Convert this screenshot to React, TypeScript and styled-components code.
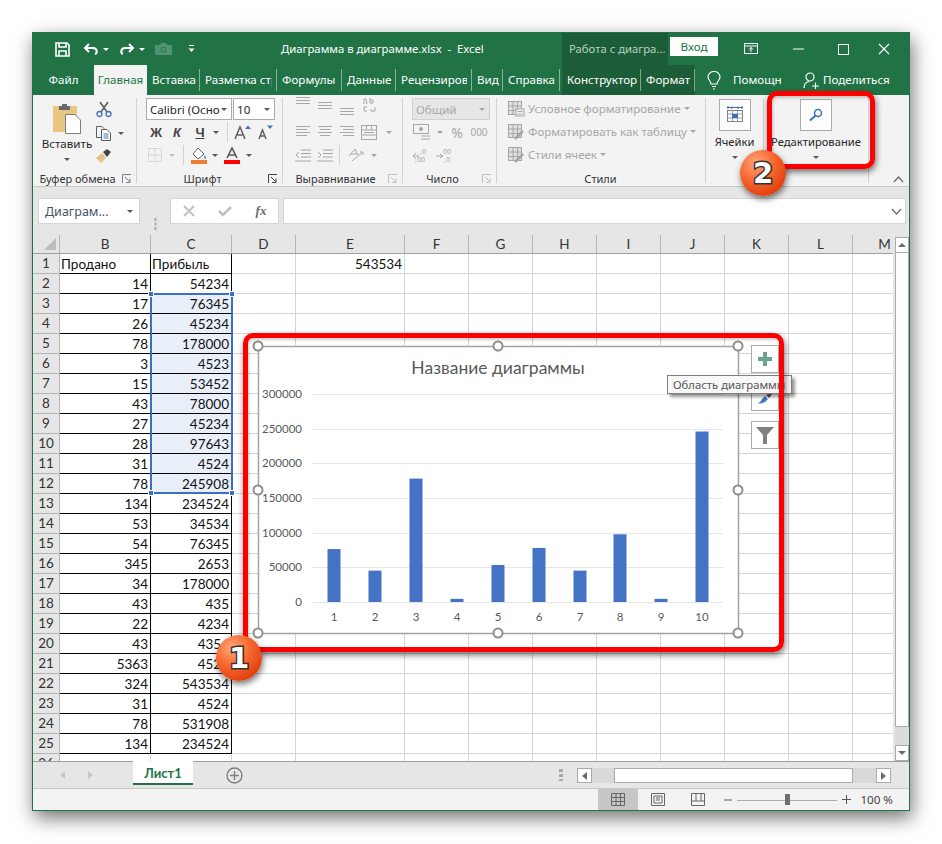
import React from 'react';
import styled, { createGlobalStyle } from 'styled-components';

const Global = createGlobalStyle`
  html, body { margin: 0; padding: 0; background: #fff; }
  body { font-family: "Noto Sans", "Open Sans", sans-serif; font-size: 11.6px; color: #262626; }
  * { box-sizing: border-box; }
  svg { flex: none; display: block; }
`;

const Page = styled.div`position: relative; width: 942px; height: 844px; padding: 32px; overflow: hidden;`;
const Window = styled.div`
  width: 878px; height: 779px; display: flex; flex-direction: column; background: #f3f3f3;
  border: 1px solid #217346; box-shadow: 2px 7px 18px rgba(0,0,0,.55);
`;
const TitleBar = styled.div`height: 32px; background: #217346; display: flex; align-items: stretch; color: #fff; flex: none;`;
const Qat = styled.div`width: 248px; padding-left: 19px; display: flex; align-items: center;`;
const Slot = styled.span<{ $w: number; $ml?: number; $top?: number }>`
  flex: none; width: ${p => p.$w}px; margin-left: ${p => p.$ml ?? 0}px; margin-top: ${p => p.$top ?? 0}px;
  display: flex; align-items: center; justify-content: center; height: 100%;
`;
const CaretSlot = styled.span<{ $top: number }>`height: 8px; margin-top: ${p => p.$top}px; display: flex; align-items: center; flex: none;`;
const DocTitle = styled.div`width: 281px; line-height: 31px; font-size: 11.3px; white-space: pre; color: #fff;`;
const ContextTitle = styled.div`width: 106px; background: #1c5c39; color: #b5d3c2; line-height: 31px; padding-left: 7px; font-size: 11.3px; white-space: nowrap;`;
const SignIn = styled.div`width: 48px; height: 19px; margin: 4px 0 0 2px; background: #fff; color: #217346; text-align: center; line-height: 19px; font-size: 11.6px;`;

const TabsRow = styled.div`height: 30px; background: #217346; display: flex; color: #fff; flex: none;`;
const Tab = styled.div<{ $w: number; $active?: boolean; $sep?: boolean; $center?: boolean }>`
  position: relative; flex: none; width: ${p => p.$w}px; overflow: hidden; white-space: nowrap;
  line-height: 29px; font-size: 11.6px; padding-left: ${p => (p.$center ? 0 : 5)}px; padding-right: ${p => (p.$sep ? 5 : 0)}px;
  text-align: ${p => (p.$center ? 'center' : 'left')};
  background: ${p => (p.$active ? '#f3f3f3' : 'transparent')}; color: ${p => (p.$active ? '#217346' : '#fff')};
  ${p => p.$sep ? `&::after { content: ''; position: absolute; right: 0; top: 4px; bottom: 4px; width: 1px; background: rgba(255,255,255,.45); }` : ''}
`;
const TabClip = styled.span`display: block; overflow: hidden;`;
const ContextTabs = styled.div`display: flex; margin-left: 2px; background: #1c5c39; flex: none;`;
const TabText = styled.div<{ $w: number }>`width: ${p => p.$w}px; line-height: 29px; font-size: 11.6px; flex: none; white-space: nowrap;`;

const Ribbon = styled.div`height: 92px; display: flex; flex: none; background: #f3f3f3; border-bottom: 1px solid #c9c9c9; position: relative;`;
const Group = styled.div<{ $w: number }>`
  flex: none; width: ${p => p.$w}px; height: 85px; margin-top: 3px; display: flex; flex-direction: column;
  border-right: 1px solid #d2d2d2;
`;
const GroupBody = styled.div<{ $pl?: number }>`flex: 1; margin-top: -1px; padding-left: ${p => p.$pl ?? 0}px; display: flex; min-height: 0;`;
const Stack = styled.div`display: flex; flex-direction: column; flex: none;`;
const Row = styled.div<{ $h: number }>`height: ${p => p.$h}px; display: flex; align-items: center;`;
const GroupLabel = styled.div`
  height: 17px; margin-bottom: -4px; display: flex; align-items: center; padding: 0 1px 0 0; font-size: 11px; color: #333; flex: none;
`;
const LabelText = styled.span`flex: 1; text-align: center; white-space: nowrap;`;
const Launcher = styled.span`width: 12px; height: 10px; display: flex; flex: none; margin-right: 1px;`;
const PasteCol = styled.div`width: 58px; margin-left: 5px; display: flex; flex-direction: column; align-items: center; padding-top: 6px; flex: none;`;
const PasteLabel = styled.span`font-size: 11.6px; line-height: 16px; margin-top: 2px; color: #262626;`;
const VSep = styled.span<{ $mx: number }>`width: 1px; height: 20px; margin: 0 ${p => p.$mx}px; background: #d2d2d2; flex: none;`;
const Combo = styled.div<{ $w: number; $ml?: number }>`
  width: ${p => p.$w}px; height: 22px; margin-left: ${p => p.$ml ?? 0}px; flex: none; background: #fff; border: 1px solid #ababab;
  display: flex; align-items: center; justify-content: space-between; padding: 0 4px 0 3px; font-size: 11.6px; white-space: nowrap; overflow: hidden; color: #262626;
`;
const ComboDisabled = styled.div`
  width: 78px; height: 22px; flex: none; background: #e6e6e6; border: 1px solid #d0d0d0; color: #a6a6a6;
  display: flex; align-items: center; justify-content: space-between; padding: 0 4px 0 3px; font-size: 11.6px;
`;
const Caret = styled.span<{ $c?: string }>`
  display: inline-block; width: 0; height: 0; flex: none; border-left: 3.5px solid transparent; border-right: 3.5px solid transparent;
  border-top: 3.5px solid ${p => p.$c ?? '#595959'};
`;
const Bold = styled.span<{ $italic?: boolean; $under?: boolean }>`
  font-family: "Liberation Sans", sans-serif; font-weight: 700; font-size: 13px; color: #444;
  font-style: ${p => (p.$italic ? 'italic' : 'normal')}; text-decoration: ${p => (p.$under ? 'underline' : 'none')};
`;
const StyleRow = styled.div`display: flex; align-items: center; height: 23px; gap: 3px; color: #a6a6a6; font-size: 11.5px; white-space: nowrap;`;
const Muted = styled.span<{ $s?: number }>`color: #a6a6a6; font-size: ${p => p.$s ?? 12}px; white-space: nowrap;`;
const BigCol = styled.div`flex: 1; display: flex; flex-direction: column; align-items: center; padding-top: 1px;`;
const BigBox = styled.div`width: 32px; height: 32px; flex: none; background: #fdfdfd; border: 1px solid #ababab; display: flex; align-items: center; justify-content: center;`;
const BigLabel = styled.span`font-size: 11.2px; line-height: 16px; margin-top: 3px; white-space: nowrap; color: #262626; `;
const Collapse = styled.span`position: absolute; right: 5px; bottom: 3px; display: flex;`;

const FormulaBar = styled.div`height: 48px; flex: none; background: #e6e6e6; padding: 11px 3px 0 5px; display: flex; align-items: flex-start;`;
const NameBox = styled.div`
  width: 102px; height: 26px; flex: none; background: #fff; border: 1px solid #d4d4d4; display: flex; align-items: center; justify-content: space-between;
  padding: 0 6px 0 6px; font-size: 12.5px; color: #44546a;
`;
const FxGroup = styled.div`width: 109px; height: 26px; flex: none; background: #fff; border: 1px solid #d4d4d4; display: flex; align-items: center;`;
const FxText = styled.span`font-family: "Liberation Serif", serif; font-style: italic; font-weight: 700; font-size: 13px; color: #6a6a6a;`;
const FormulaInput = styled.div`flex: 1; height: 26px; margin-left: 4px; background: #fff; border: 1px solid #d4d4d4; display: flex; align-items: center; justify-content: flex-end; padding-right: 3px;`;

const SheetArea = styled.div`height: 526px; flex: none; display: flex; background: #e6e6e6;`;
const SheetMain = styled.div`width: 860px; flex: none; display: flex; flex-direction: column; overflow: hidden;`;
const HeaderRow = styled.div`height: 19px; flex: none; display: flex; border-bottom: 1px solid #9f9f9f; background: #e6e6e6;`;
const Corner = styled.div`width: 27px; flex: none; border-right: 1px solid #b5b5b5; display: flex; align-items: flex-end; justify-content: flex-end; padding: 0 3px 3px 0;`;
const ColHead = styled.div<{ $w: number }>`
  width: ${p => p.$w}px; flex: none; border-right: 1px solid #b5b5b5; text-align: center; font-family: Lato, sans-serif; font-size: 13.5px; line-height: 18px; color: #333;
`;
const Rows = styled.div`flex: 1; overflow: hidden; background: #fff;`;
const DataRow = styled.div`height: 20px; display: flex;`;
const RowHead = styled.div`width: 27px; flex: none; background: #e6e6e6; border-right: 1px solid #b5b5b5; border-bottom: 1px solid #b5b5b5; text-align: center; font-family: Lato, sans-serif; font-size: 13.5px; line-height: 19px; color: #333;`;
const Cell = styled.div<{ $w: number; $strong?: boolean; $sel?: boolean; $right?: boolean }>`
  width: ${p => p.$w}px; flex: none; height: 20px; padding: 0 2px 0 1px; font-family: Lato, sans-serif; font-size: 13.5px; line-height: 20px; color: #111; white-space: nowrap;
  text-align: ${p => (p.$right ? 'right' : 'left')}; background: ${p => (p.$sel ? '#e8eff8' : '#fff')};
  border-right: 1px solid ${p => (p.$strong ? '#000' : '#d4d4d4')}; border-bottom: 1px solid ${p => (p.$strong ? '#000' : '#d4d4d4')};
`;
const VScroll = styled.div`width: 16px; flex: none; padding: 2px 0 0 2px; display: flex; flex-direction: column;`;
const ScrollBtn = styled.div`width: 14px; height: 16px; flex: none; background: #fff; border: 1px solid #ababab; display: flex; align-items: center; justify-content: center;`;
const VThumb = styled.div`width: 14px; height: 474px; flex: none; background: #fff; border: 1px solid #ababab; border-top: none;`;
const VTrack = styled.div`flex: 1; background: #dcdcdc; width: 14px;`;
const Up = styled.span`width: 0; height: 0; border-left: 4px solid transparent; border-right: 4px solid transparent; border-bottom: 4px solid #6a6a6a;`;
const Down = styled.span`width: 0; height: 0; border-left: 4px solid transparent; border-right: 4px solid transparent; border-top: 4px solid #6a6a6a;`;
const Lft = styled.span<{ $c?: string }>`width: 0; height: 0; border-top: 4px solid transparent; border-bottom: 4px solid transparent; border-right: 5px solid ${p => p.$c ?? '#6a6a6a'};`;
const Rgt = styled.span<{ $c?: string }>`width: 0; height: 0; border-top: 4px solid transparent; border-bottom: 4px solid transparent; border-left: 5px solid ${p => p.$c ?? '#6a6a6a'};`;

const SheetTabs = styled.div`height: 28px; flex: none; background: #e6e6e6; border-top: 1px solid #9f9f9f; border-bottom: 1px solid #c9c9c9; display: flex;`;
const SheetTab = styled.div`
  width: 60px; height: 24px; margin: -1px 0 0 33px; flex: none; background: #fff; border-bottom: 2px solid #217346; color: #217346;
  text-align: center; font-family: Lato, sans-serif; font-weight: 700; font-size: 13px; line-height: 25px;
`;
const HScrollWrap = styled.div`display: flex; margin-left: auto; margin-right: 18px; align-items: flex-start; padding-top: 6px;`;
const Grip = styled.div`width: 4px; height: 12px; margin-right: 14px; margin-top: 1px; background: repeating-linear-gradient(#ababab 0 3px, transparent 3px 5px); flex: none;`;
const HBtn = styled.div`width: 15px; height: 15px; flex: none; background: #fff; border: 1px solid #ababab; display: flex; align-items: center; justify-content: center;`;
const HTrack = styled.div`width: 284px; height: 15px; flex: none; background: #d9d9d9; padding: 0 23px 0 22px;`;
const HThumb = styled.div`height: 15px; background: #fff; border: 1px solid #ababab;`;

const StatusBar = styled.div`flex: 1; background: #f3f3f3; display: flex; justify-content: flex-end; align-items: stretch;`;
const ViewBtn = styled.div<{ $active?: boolean }>`width: 40px; flex: none; background: ${p => (p.$active ? '#c6c6c6' : 'transparent')}; display: flex; align-items: center; justify-content: center;`;
const Slider = styled.div`width: 100px; flex: none; position: relative; display: flex; align-items: center; justify-content: center;
  &::before { content: ''; position: absolute; left: 0; right: 0; top: 50%; height: 1px; background: #ababab; }`;
const SliderThumb = styled.span`width: 5px; height: 11px; background: #6e6e6e; position: relative;`;
const ZoomText = styled.div`width: 37px; margin-right: 16px; text-align: right; flex: none; line-height: 21px; font-size: 11.6px; color: #444; white-space: nowrap;`;

const Selection = styled.div`position: absolute; left: 150px; top: 293px; width: 83px; height: 201px; border: 2px solid #3a6fc4; pointer-events: none;`;
const SelHandle = styled.span<{ $x: 'l' | 'r'; $y: 't' | 'b' }>`
  position: absolute; width: 6px; height: 6px; background: #3a6fc4; border: 1px solid #fff;
  ${p => (p.$x === 'l' ? 'left: -4px;' : 'right: -4px;')} ${p => (p.$y === 't' ? 'top: -4px;' : 'bottom: -4px;')}
`;
const ChartSvg = styled.svg`position: absolute; left: 258px; top: 346px; overflow: visible;`;
const ChartBtn = styled.div<{ $top: number; $h: number }>`
  position: absolute; left: 751px; top: ${p => p.$top}px; width: 28px; height: ${p => p.$h}px; background: #fff; border: 1px solid #ababab;
  display: flex; align-items: center; justify-content: center;
`;
const Tooltip = styled.div`
  position: absolute; left: 667px; top: 375px; width: 125px; height: 19px; background: #f8f8f8; border: 1px solid #7f7f7f; box-shadow: 3px 3px 3px rgba(0,0,0,.4);
  font-size: 11.3px; line-height: 17px; padding-left: 5px; color: #575757; white-space: nowrap; overflow: hidden;
`;
const Callout = styled.div<{ $x: number; $y: number; $w: number; $h: number }>`
  position: absolute; left: ${p => p.$x}px; top: ${p => p.$y}px; width: ${p => p.$w}px; height: ${p => p.$h}px;
  border: 5px solid #ff0000; border-radius: 10px; box-shadow: 1px 3px 6px rgba(0,0,0,.55), inset 1px 2px 3px rgba(0,0,0,.2); pointer-events: none;
`;
const Badge = styled.div<{ $x: number; $y: number }>`
  position: absolute; left: ${p => p.$x}px; top: ${p => p.$y}px; width: 46px; height: 46px; border-radius: 50%;
  background: radial-gradient(circle at 35% 28%, #ffa67c 0%, #f7682f 40%, #e2420f 75%, #b9300a 100%);
  box-shadow: 1px 3px 6px rgba(0,0,0,.55); text-align: center; font-family: "DejaVu Sans", sans-serif; font-weight: 700; font-size: 29px; line-height: 46px; color: #fff;
  -webkit-text-stroke: 3px #333; paint-order: stroke fill;
`;

const BLUE = '#4472c4';
const DIS = '#a6a6a6';

const Svg: React.FC<{ w: number; h: number; children: React.ReactNode; stroke?: string; sw?: number }> = ({ w, h, children, stroke = 'none', sw = 1 }) => (
  <svg width={w} height={h} viewBox={`0 0 ${w} ${h}`} fill="none" stroke={stroke} strokeWidth={sw}>{children}</svg>
);

const SaveIcon = () => (
  <Svg w={15} h={15} stroke="#fff" sw={1.6}>
    <path d="M1 1H12L14 3V14H1Z" /><path d="M4 1V5H11V1" /><path d="M4 14V9H11V14" />
  </Svg>
);
const UndoIcon = () => (
  <Svg w={16} h={12} stroke="#fff" sw={2}><path d="M6 1L2 5L6 9" /><path d="M2 5H10C14 5 15 10 12 11" /></Svg>
);
const RedoIcon = () => (
  <Svg w={16} h={12} stroke="#fff" sw={2}><path d="M10 1L14 5L10 9" /><path d="M14 5H6C2 5 1 10 4 11" /></Svg>
);
const CameraIcon = () => (
  <Svg w={17} h={12}><path d="M0 2H5L6 0H11L12 2H17V12H0Z" fill="#4f9470" /><circle cx="8.5" cy="6.5" r="2.5" stroke="#217346" /></Svg>
);
const CustomizeIcon = () => (
  <Svg w={7} h={8}><path d="M1 .5H6" stroke="#fff" /><path d="M0.5 3.5H6.5L3.5 7Z" fill="#fff" /></Svg>
);
const DisplayIcon = () => (
  <Svg w={14} h={12} stroke="#fff"><rect x=".5" y=".5" width="13" height="10" /><path d="M.5 3H13.5" /><path d="M7 9V4.5M5 6.5L7 4.5L9 6.5" /></Svg>
);
const BulbIcon = () => (
  <Svg w={14} h={19} stroke="#fff" sw={1.2}><path d="M4 13C4 10 1 9 1 6A6 5.5 0 0 1 13 6C13 9 10 10 10 13Z" /><path d="M5 15.5H9M6 18H8" /></Svg>
);
const PersonIcon = () => (
  <Svg w={16} h={17} stroke="#fff" sw={1.2}><circle cx="7" cy="5" r="4" /><path d="M1 16C1 12 3 10 6 9.500M9 14H16M12.500 10.500V17" /></Svg>
);
const PasteIcon = () => (
  <Svg w={30} h={31}>
    <rect x="1" y="3" width="24" height="26" fill="#eac683" />
    <path d="M10 3V1H15V3H18V7H7V3Z" fill="#6a6a6a" />
    <path d="M13.500 11.500H23L28.500 17V30.500H13.500Z" fill="#fff" stroke="#7f7f7f" />
  </Svg>
);
const ScissorsIcon = () => (
  <Svg w={16} h={17}>
    <path d="M4 1L11 11M12 1L5 11" stroke="#5f5f5f" strokeWidth="1.600" />
    <circle cx="3.500" cy="13" r="2.500" stroke={BLUE} strokeWidth="1.300" /><circle cx="12.500" cy="13" r="2.500" stroke={BLUE} strokeWidth="1.300" />
  </Svg>
);
const CopyIcon = () => (
  <Svg w={16} h={15} stroke="#5f5f5f"><path d="M.5.5H6L8 2.500V11.500H.5Z" fill="#f3f3f3" /><path d="M5.500 3.500H11L14.500 7V14.500H5.500Z" fill="#fff" /><path d="M7.500 8H12.500M7.500 10H12.500M7.500 12H12.500" stroke={BLUE} /></Svg>
);
const BrushIcon = () => (
  <Svg w={16} h={14}><path d="M0 9L6 4L10 9L5 14Z" fill="#e4c283" /><path d="M7 3L11 0L15 3L11 8Z" fill="#444" /></Svg>
);
const LauncherIcon: React.FC<{ c?: string }> = ({ c = '#7f7f7f' }) => (
  <Svg w={10} h={10} stroke={c}><path d="M.5 9V.5H9" /><path d="M3 3L8 8M8 4.500V8.500H4" /></Svg>
);
const FontA: React.FC<{ s: number; arrow: 'u' | 'd' }> = ({ s, arrow }) => (
  <Svg w={18} h={15}>
    <path d={s > 13 ? 'M1 14L6 2L11 14M3.500 10H8.500' : 'M3 14L6.500 5L10 14M4.500 11H8.500'} stroke="#5f5f5f" strokeWidth="1.500" />
    <path d={arrow === 'u' ? 'M11 4L14 0.500L17 4Z' : 'M11 0.500H17L14 4Z'} fill={BLUE} />
  </Svg>
);
const BordersIcon = () => (
  <Svg w={14} h={14} stroke="#bfbfbf" sw={1}>
    <path d="M.5.5H13.500V13.500H.5ZM7 .5V13.500M.5 7H13.500" strokeDasharray="1 1" />
  </Svg>
);
const FillIcon = () => (
  <Svg w={17} h={17}>
    <path d="M7 1L13 7L7 12L2 7Z" stroke="#5f5f5f" fill="#fff" /><path d="M13 8C15 10 15.500 11 14.500 12C13.500 12 13 10 13 8Z" fill={BLUE} />
    <rect x="0" y="13" width="16" height="4" fill="#ed7d31" />
  </Svg>
);
const ColorA = () => (
  <Svg w={16} h={17}>
    <path d="M3 11L8 1L13 11M5 8H11" stroke="#555" strokeWidth="1.600" />
    <rect x="0" y="13" width="16" height="4" fill="#ff0000" />
  </Svg>
);
const Lines: React.FC<{ rows: [number, number][]; top?: number; gap?: number }> = ({ rows, top = 0.5, gap = 3 }) => {
  const d = rows.map((r, i) => `M${r[0]} ${top + i * gap}H${r[1]}`).join('');
  return <Svg w={16} h={16} stroke={DIS}><path d={d} /></Svg>;
};
const AbIcon = () => (
  <Svg w={14} h={16}><path d="M2 7V2H4L5 7" stroke={DIS} /><path d="M8 1V6H11V3H8M2 10H5M2 10V14H5M9 12V14H13V10" stroke={DIS} /></Svg>
);
const MergeIcon = () => (
  <Svg w={16} h={15} stroke={DIS}><rect x=".5" y=".5" width="15" height="14" /><path d="M.5 5H15.500M.5 10H15.500M5.500 .5V5M10.500 .5V5M3 7.500H13" /></Svg>
);
const IndentIcon: React.FC<{ dir: number }> = ({ dir }) => (
  <Svg w={16} h={13} stroke={DIS}><path d="M6 1H16M6 4.500H16M6 8H16M0 12H16" /><path d={dir < 0 ? 'M4 3L1 6L4 9' : 'M1 3L4 6L1 9'} /></Svg>
);
const OrientIcon = () => (
  <Svg w={16} h={16} stroke={DIS}><path d="M1 9L7 2L10 8M3 7H9M4 14L15 5M12 5H15V8" /></Svg>
);
const MoneyIcon = () => (
  <Svg w={18} h={16}><rect x=".5" y=".5" width="15" height="9" stroke={DIS} /><circle cx="8" cy="5" r="2" fill={DIS} /><path d="M8 12H17M8 15H17" stroke={DIS} /></Svg>
);
const DecIcon: React.FC<{ flip?: boolean }> = ({ flip }) => (
  <Svg w={20} h={15} stroke={DIS}>
    <path d={flip ? 'M1 8H8M5 6L8 8L5 10' : 'M4 5L1 8L4 11M1 8H7'} />
    <text x="8" y="6" fontSize="7" fill={DIS} stroke="none">{flip ? '00' : ',0'}</text>
    <text x={flip ? 9 : 3} y="14" fontSize="7" fill={DIS} stroke="none">{flip ? ',0' : ',00'}</text>
  </Svg>
);
const StyleIcon: React.FC<{ kind: number }> = ({ kind }) => (
  <Svg w={17} h={16} stroke={DIS}>
    <rect x=".5" y=".5" width="13" height="13" fill="#e0e0e0" />
    <path d="M.5 5H13.500M.5 9.500H13.500M5 .5V13.500M9.500 .5V13.500" />
    {kind === 0 ? <rect x="8" y="8" width="8" height="7" fill="#f3f3f3" /> : <path d="M7 15L15 7" strokeWidth="2.500" />}
    {kind === 0 ? <path d="M9.500 10.500H14.500M9.500 13H14.500" /> : null}
  </Svg>
);
const CellsIcon = () => (
  <Svg w={16} h={18}>
    <path d="M0 1.500H16M1 0V3M15 0V3M5 .5V3M11 .5V3" stroke="#3f6fb5" />
    <rect x=".5" y="4.500" width="15" height="11" stroke="#7f7f7f" fill="#fff" />
    <path d="M.5 8H15.500M.5 12H15.500M5.500 4.500V15.500M10.500 4.500V15.500" stroke="#9a9a9a" />
    <rect x="5" y="8" width="6" height="4" fill="#3f6fb5" />
  </Svg>
);
const SearchIcon = () => (
  <Svg w={14} h={14}><circle cx="9" cy="5" r="3.500" stroke="#3f73b6" strokeWidth="1.500" /><path d="M6.500 7.500L1 12.500" stroke="#3f73b6" strokeWidth="2" /></Svg>
);
const Chevron: React.FC<{ up?: boolean; c?: string }> = ({ up, c = '#6a6a6a' }) => (
  <Svg w={11} h={7} stroke={c} sw={1.200}><path d={up ? 'M1 6L5.500 1L10 6' : 'M1 1L5.500 6L10 1'} /></Svg>
);
const PlusCircle = () => (
  <Svg w={17} h={17} stroke="#7f7f7f" sw={1.400}><circle cx="8.500" cy="8.500" r="7.500" /><path d="M8.500 4V13M4 8.500H13" /></Svg>
);

const colWidths = [91, 81, 64, 109, 64, 64, 64, 64, 64, 64, 64, 64];
const colNames = ['B', 'C', 'D', 'E', 'F', 'G', 'H', 'I', 'J', 'K', 'L', 'M'];
const colB = [14, 17, 26, 78, 3, 15, 43, 27, 28, 31, 78, 134, 53, 54, 345, 34, 43, 22, 43, 5363, 324, 31, 78, 134];
const colC = [54234, 76345, 45234, 178000, 4523, 53452, 78000, 45234, 97643, 4524, 245908, 234524, 34534, 76345, 2653, 178000, 435, 4234, 4354, 4523, 543534, 4524, 531908, 234524];
const bars = [76345, 45234, 178000, 4523, 53452, 78000, 45234, 97643, 4524, 245908];
const barX = [334, 375, 416, 457, 498, 539, 580, 620, 661, 702];
const gridY = [394, 429, 463, 498, 533, 567, 602];
const axis = ['300000', '250000', '200000', '150000', '100000', '50000', '0'];
const handles: [number, number][] = [[258, 346], [498, 346], [738, 346], [258, 490], [738, 490], [258, 633], [498, 633], [738, 633]];

function cellsFor(row: number) {
  return colNames.map((n, i) => {
    const w = colWidths[i];
    if (n === 'B' && row <= 25) {
      return row === 1
        ? <Cell key={n} $w={w} $strong>Продано</Cell>
        : <Cell key={n} $w={w} $strong $right>{colB[row - 2]}</Cell>;
    }
    if (n === 'C' && row <= 25) {
      return row === 1
        ? <Cell key={n} $w={w} $strong>Прибыль</Cell>
        : <Cell key={n} $w={w} $strong $right $sel={row >= 3 && row <= 12}>{colC[row - 2]}</Cell>;
    }
    if (n === 'E' && row === 1) return <Cell key={n} $w={w} $right>543534</Cell>;
    return <Cell key={n} $w={w} />;
  });
}

export default function App() {
  const rows = Array.from({ length: 26 }, (_, i) => i + 1);
  return (
    <Page>
      <Global />
      <Window>
        <TitleBar>
          <Qat>
            <Slot $w={20}><SaveIcon /></Slot>
            <Slot $w={18} $ml={10}><UndoIcon /></Slot>
            <Slot $w={10} $ml={1}><Caret $c="#fff" /></Slot>
            <Slot $w={18} $ml={7}><RedoIcon /></Slot>
            <Slot $w={10} $ml={1}><Caret $c="#fff" /></Slot>
            <Slot $w={20} $ml={6}><CameraIcon /></Slot>
            <Slot $w={10} $ml={13}><CustomizeIcon /></Slot>
          </Qat>
          <DocTitle>{'Диаграмма в диаграмме.xlsx  -  Excel'}</DocTitle>
          <ContextTitle>Работа с диагра...</ContextTitle>
          <SignIn>Вход</SignIn>
          <Slot $w={66}><DisplayIcon /></Slot>
          <Slot $w={28}><Svg w={11} h={2} stroke="#fff"><path d="M0 1H11" /></Svg></Slot>
          <Slot $w={62}><Svg w={11} h={11} stroke="#fff"><rect x=".5" y=".5" width="10" height="10" /></Svg></Slot>
          <Slot $w={20}><Svg w={12} h={12} stroke="#fff" sw={1.200}><path d="M1 1L11 11M11 1L1 11" /></Svg></Slot>
        </TitleBar>
        <TabsRow>
          <Tab $w={61} $center>Файл</Tab>
          <Tab $w={53} $active $center>Главная</Tab>
          <Tab $w={53} $sep>Вставка</Tab>
          <Tab $w={77} $sep><TabClip>Разметка стр</TabClip></Tab>
          <Tab $w={65} $sep>Формулы</Tab>
          <Tab $w={54} $sep>Данные</Tab>
          <Tab $w={76} $sep><TabClip>Рецензирова</TabClip></Tab>
          <Tab $w={31} $sep>Вид</Tab>
          <Tab $w={57} $sep>Справка</Tab>
          <ContextTabs>
            <Tab $w={79} $sep>Конструктор</Tab>
            <Tab $w={54} $sep>Формат</Tab>
          </ContextTabs>
          <Slot $w={38}><BulbIcon /></Slot>
          <TabText $w={66}>Помощн</TabText>
          <Slot $w={24}><PersonIcon /></Slot>
          <TabText $w={66}>Поделиться</TabText>
        </TabsRow>
        <Ribbon>
          <Group $w={104}>
            <GroupBody>
              <PasteCol>
                <PasteIcon />
                <PasteLabel>Вставить</PasteLabel>
                <CaretSlot $top={3}><Caret /></CaretSlot>
              </PasteCol>
              <Stack>
                <Row $h={24}><Slot $w={16}><ScissorsIcon /></Slot></Row>
                <Row $h={24}><Slot $w={16}><CopyIcon /></Slot><Slot $w={12} $ml={3}><Caret /></Slot></Row>
                <Row $h={22}><Slot $w={16}><BrushIcon /></Slot></Row>
              </Stack>
            </GroupBody>
            <GroupLabel><LabelText>Буфер обмена</LabelText><Launcher><LauncherIcon /></Launcher></GroupLabel>
          </Group>
          <Group $w={146}>
            <GroupBody $pl={9}>
              <Stack>
                <Row $h={24}>
                  <Combo $w={86}>Calibri (Осно<Caret /></Combo>
                  <Combo $w={42} $ml={1}>10<Caret /></Combo>
                </Row>
                <Row $h={22}>
                  <Slot $w={20}><Bold>Ж</Bold></Slot>
                  <Slot $w={22}><Bold $italic>К</Bold></Slot>
                  <Slot $w={24}><Bold $under>Ч</Bold></Slot>
                  <Slot $w={8}><Caret /></Slot>
                  <VSep $mx={7} />
                  <Slot $w={30} $ml={-7}><FontA s={15} arrow="u" /></Slot>
                  <Slot $w={14}><FontA s={12} arrow="d" /></Slot>
                </Row>
                <Row $h={24}>
                  <Slot $w={18}><BordersIcon /></Slot>
                  <Slot $w={16}><Caret $c="#bfbfbf" /></Slot>
                  <VSep $mx={3} />
                  <Slot $w={26} $ml={-1}><FillIcon /></Slot>
                  <Slot $w={6}><Caret /></Slot>
                  <Slot $w={28}><ColorA /></Slot>
                  <Slot $w={6}><Caret /></Slot>
                </Row>
              </Stack>
            </GroupBody>
            <GroupLabel><LabelText>Шрифт</LabelText><Launcher><LauncherIcon c="#444" /></Launcher></GroupLabel>
          </Group>
          <Group $w={120}>
            <GroupBody $pl={9}>
              <Stack>
                <Row $h={24}>
                  <Slot $w={22} $top={-8}><Lines rows={[[1, 15], [1, 15], [1, 15]]} /></Slot>
                  <Slot $w={22} $top={-4}><Lines rows={[[1, 15], [1, 15], [1, 15]]} top={3.500} /></Slot>
                  <Slot $w={22}><Lines rows={[[1, 15], [1, 15], [1, 15]]} top={7.500} /></Slot>
                  <Slot $w={22} $top={-8}><AbIcon /></Slot>
                </Row>
                <Row $h={22}>
                  <Slot $w={22}><Lines rows={[[1, 15], [1, 12], [1, 15], [1, 12]]} top={2.500} /></Slot>
                  <Slot $w={22}><Lines rows={[[1, 15], [3, 13], [1, 15], [3, 13]]} top={2.500} /></Slot>
                  <Slot $w={22}><Lines rows={[[1, 15], [4, 15], [1, 15], [4, 15]]} top={2.500} /></Slot>
                  <Slot $w={22}><MergeIcon /></Slot>
                  <Slot $w={18}><Caret $c={DIS} /></Slot>
                </Row>
                <Row $h={24}>
                  <Slot $w={22}><IndentIcon dir={-1} /></Slot>
                  <Slot $w={22}><IndentIcon dir={1} /></Slot>
                  <VSep $mx={3} />
                  <Slot $w={26}><OrientIcon /></Slot>
                  <Slot $w={10}><Caret $c={DIS} /></Slot>
                </Row>
              </Stack>
            </GroupBody>
            <GroupLabel><LabelText>Выравнивание</LabelText><Launcher><LauncherIcon c="#bfbfbf" /></Launcher></GroupLabel>
          </Group>
          <Group $w={94}>
            <GroupBody $pl={9}>
              <Stack>
                <Row $h={24}><ComboDisabled>Общий<Caret $c={DIS} /></ComboDisabled></Row>
                <Row $h={22}>
                  <Slot $w={20}><MoneyIcon /></Slot>
                  <Slot $w={16}><Caret $c={DIS} /></Slot>
                  <Slot $w={18}><Muted $s={14}>%</Muted></Slot>
                  <Slot $w={20} $ml={3}><Muted $s={10}>000</Muted></Slot>
                </Row>
                <Row $h={24}>
                  <Slot $w={20}><DecIcon /></Slot>
                  <Slot $w={24} $ml={1}><DecIcon flip /></Slot>
                </Row>
              </Stack>
            </GroupBody>
            <GroupLabel><LabelText>Число</LabelText><Launcher><LauncherIcon c="#bfbfbf" /></Launcher></GroupLabel>
          </Group>
          <Group $w={209}>
            <GroupBody $pl={11}>
              <Stack>
                <StyleRow><StyleIcon kind={0} />Условное форматирование<Caret $c={DIS} /></StyleRow>
                <StyleRow><StyleIcon kind={1} />Форматировать как таблицу<Caret $c={DIS} /></StyleRow>
                <StyleRow><StyleIcon kind={2} />Стили ячеек<Caret $c={DIS} /></StyleRow>
              </Stack>
            </GroupBody>
            <GroupLabel><LabelText>Стили</LabelText></GroupLabel>
          </Group>
          <Group $w={58}>
            <BigCol>
              <BigBox><CellsIcon /></BigBox>
              <BigLabel>Ячейки</BigLabel>
              <CaretSlot $top={3}><Caret /></CaretSlot>
            </BigCol>
          </Group>
          <Group $w={105}>
            <BigCol>
              <BigBox><SearchIcon /></BigBox>
              <BigLabel>Редактирование</BigLabel>
              <CaretSlot $top={3}><Caret /></CaretSlot>
            </BigCol>
          </Group>
          <Collapse><Chevron up /></Collapse>
        </Ribbon>
        <FormulaBar>
          <NameBox>Диаграм...<Caret /></NameBox>
          <Slot $w={30} $top={7}><Svg w={3} h={12}><path d="M1.500 0V3M1.500 4.500V7.500M1.500 9V12" stroke="#ababab" strokeWidth="2" /></Svg></Slot>
          <FxGroup>
            <Slot $w={36}><Svg w={12} h={12} stroke="#c0c0c0" sw={2}><path d="M1 1L11 11M11 1L1 11" /></Svg></Slot>
            <Slot $w={36}><Svg w={14} h={12} stroke="#c0c0c0" sw={2.500}><path d="M1 6L5 10L13 2" /></Svg></Slot>
            <Slot $w={36}><FxText>fx</FxText></Slot>
          </FxGroup>
          <FormulaInput><Chevron /></FormulaInput>
        </FormulaBar>
        <SheetArea>
          <SheetMain>
            <HeaderRow>
              <Corner><Svg w={12} h={12}><path d="M12 0V12H0Z" fill="#bdbdbd" /></Svg></Corner>
              {colNames.map((n, i) => <ColHead key={n} $w={colWidths[i]}>{n}</ColHead>)}
            </HeaderRow>
            <Rows>
              {rows.map(r => (
                <DataRow key={r}>
                  <RowHead>{r}</RowHead>
                  {cellsFor(r)}
                </DataRow>
              ))}
            </Rows>
          </SheetMain>
          <VScroll>
            <ScrollBtn><Up /></ScrollBtn>
            <VThumb />
            <VTrack />
            <ScrollBtn><Down /></ScrollBtn>
          </VScroll>
        </SheetArea>
        <SheetTabs>
          <Slot $w={20} $ml={19}><Lft $c="#c6c6c6" /></Slot>
          <Slot $w={20} $ml={8}><Rgt $c="#c6c6c6" /></Slot>
          <SheetTab>Лист1</SheetTab>
          <Slot $w={24} $ml={29}><PlusCircle /></Slot>
          <HScrollWrap>
            <Grip />
            <HBtn><Lft /></HBtn>
            <HTrack><HThumb /></HTrack>
            <HBtn><Rgt /></HBtn>
          </HScrollWrap>
        </SheetTabs>
        <StatusBar>
          <ViewBtn $active><Svg w={14} h={13} stroke="#666"><path d="M.5.5H13.500V12.500H.5ZM5 .5V12.500M9.500 .5V12.500M.5 4.500H13.500M.5 8.500H13.500" /></Svg></ViewBtn>
          <ViewBtn><Svg w={14} h={13} stroke="#666"><path d="M.5.5H13.500V12.500H.5ZM3 3H11V10H3ZM5 5H9M5 7H9" /></Svg></ViewBtn>
          <ViewBtn><Svg w={14} h={13} stroke="#666"><path d="M.5.5H13.500V12.500H.5ZM.5 8H13.500M5 .5V8M10 .5V8" /></Svg></ViewBtn>
          <Slot $w={19}><Svg w={8} h={2} stroke="#555"><path d="M0 1H8" /></Svg></Slot>
          <Slider><SliderThumb /></Slider>
          <Slot $w={19}><Svg w={9} h={9} stroke="#555"><path d="M0 4.500H9M4.500 0V9" /></Svg></Slot>
          <ZoomText>100 %</ZoomText>
        </StatusBar>
      </Window>

      <Selection>
        <SelHandle $x="l" $y="t" /><SelHandle $x="r" $y="t" />
        <SelHandle $x="l" $y="b" /><SelHandle $x="r" $y="b" />
      </Selection>

      <ChartSvg width={481} height={288} viewBox="258 346 481 288">
        <rect x="258.500" y="346.500" width="480" height="287" fill="#fff" stroke="#a3a3a3" strokeWidth="1.500" />
        <text x="498" y="374" textAnchor="middle" fontFamily="Lato, sans-serif" fontSize="17.500" fill="#595959">Название диаграммы</text>
        {gridY.map((y, i) => (
          <g key={y}>
            <path d={`M313 ${y + 0.5}H723`} stroke="#e6e6e6" />
            <text x="302" y={y + 4} textAnchor="end" fontFamily="Lato, sans-serif" fontSize="11.500" fill="#595959">{axis[i]}</text>
          </g>
        ))}
        {bars.map((v, i) => {
          const h = (v / 300000) * 208;
          return <rect key={i} x={barX[i] - 6.5} y={602 - h} width="13" height={h} fill="#4472c4" />;
        })}
        {barX.map((x, i) => (
          <text key={x} x={x} y="621" textAnchor="middle" fontFamily="Lato, sans-serif" fontSize="11.500" fill="#595959">{i + 1}</text>
        ))}
        {handles.map(([x, y]) => <circle key={`${x}-${y}`} cx={x} cy={y} r="4.500" fill="#fff" stroke="#8e8e8e" strokeWidth="2" />)}
      </ChartSvg>

      <ChartBtn $top={345} $h={28}>
        <Svg w={14} h={14}><path d="M5 0H9V5H14V9H9V14H5V9H0V5H5Z" fill="#6aa58c" /></Svg>
      </ChartBtn>
      <ChartBtn $top={385} $h={26}>
        <Svg w={16} h={12}><path d="M0 11C3 11 4 9 5 7L8 4L11 7L8 10C6 11 3 12 0 11Z" fill="#4472c4" /><path d="M9 3L12 6L16 1Z" fill="#555" /></Svg>
      </ChartBtn>
      <ChartBtn $top={421} $h={28}>
        <Svg w={18} h={17}><path d="M0 0H18L11 8V17H7V8Z" fill="#808080" /></Svg>
      </ChartBtn>
      <Tooltip>Область диаграммы</Tooltip>

      <Callout $x={243} $y={333} $w={541} $h={319} />
      <Callout $x={767} $y={91} $w={108} $h={78} />
      <Badge $x={216} $y={635}>1</Badge>
      <Badge $x={740} $y={150}>2</Badge>
    </Page>
  );
}
